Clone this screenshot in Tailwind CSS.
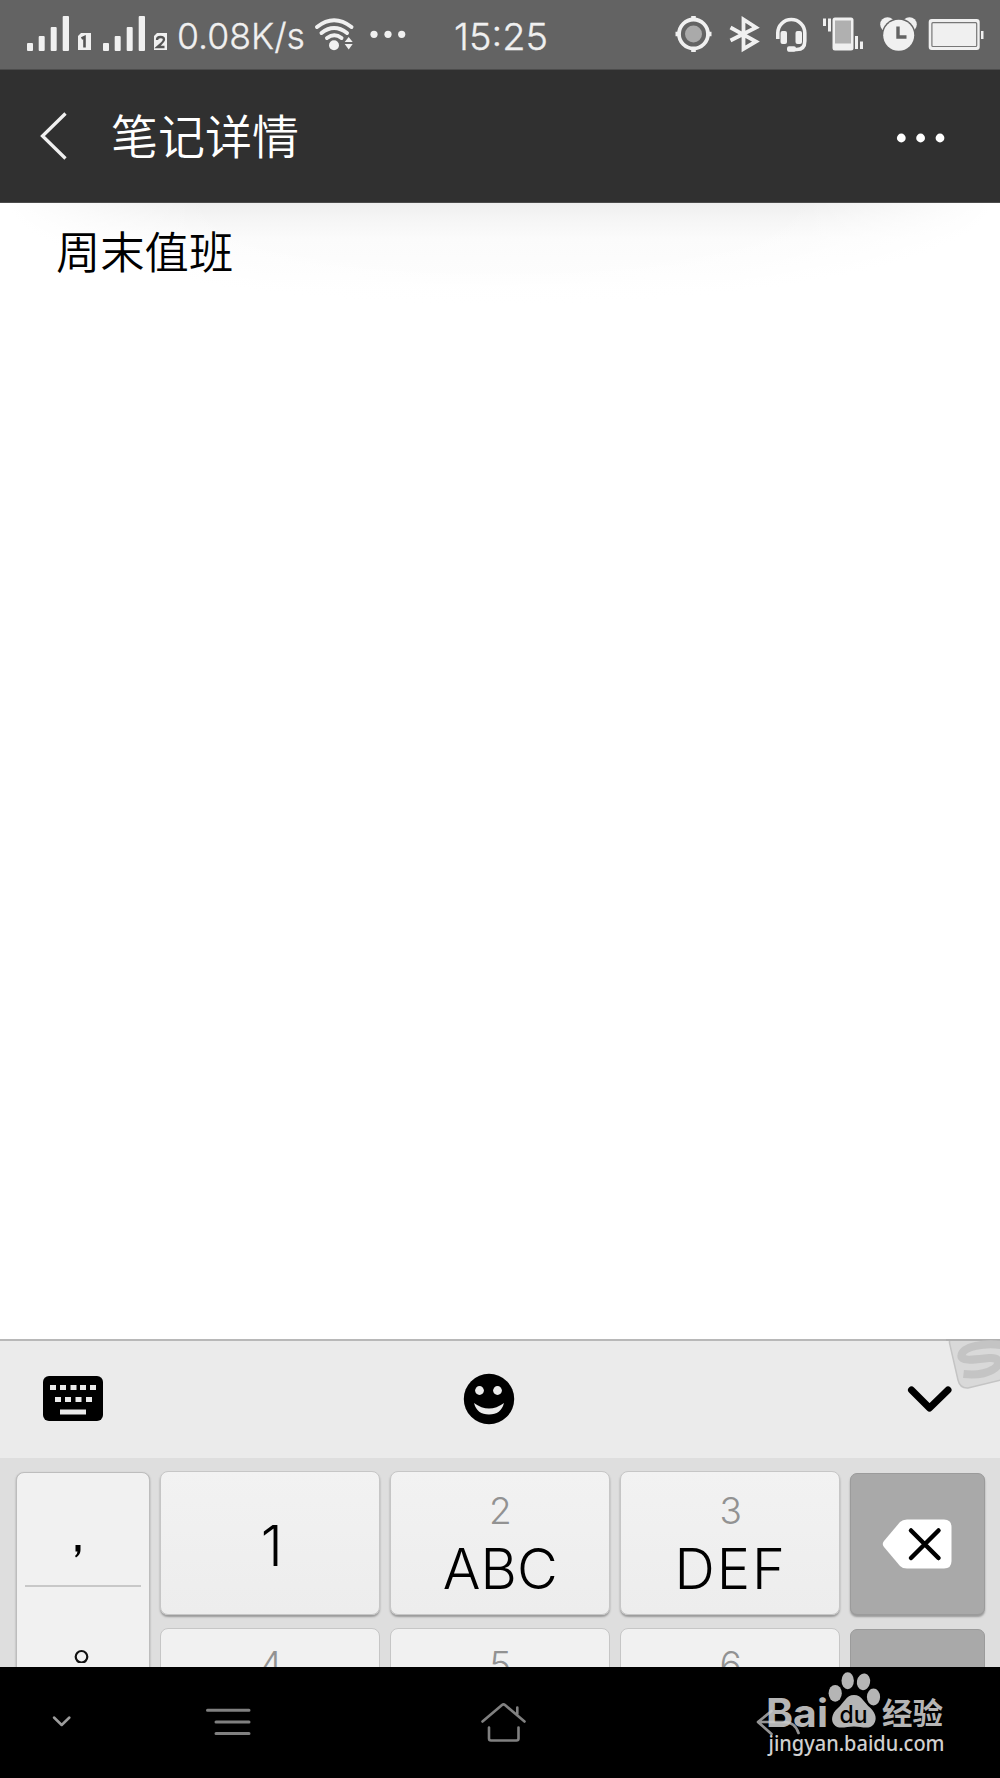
<!DOCTYPE html>
<html lang="zh-CN">
<head>
<meta charset="utf-8">
<title>笔记详情</title>
<script src="https://cdn.jsdelivr.net/npm/@tailwindcss/browser@4"></script>
</head>
<body class="bg-white">
<div class="flex h-[1778px] w-[1000px] flex-col overflow-hidden bg-white font-['Inter','Noto_Sans_CJK_SC',sans-serif]">

  <!-- Status bar -->
  <div class="flex h-[70px] shrink-0 border-b border-[#4c4c4c] bg-[#636363]">
    <svg class="h-[69px] w-[420px] shrink-0" viewBox="0 0 420 69" fill="#f0f0f0">
      <g id="bars">
        <rect x="27" y="43" width="6" height="8" rx="1"/><rect x="38.700" y="36" width="6" height="15" rx="1"/><rect x="50.700" y="27" width="6" height="24" rx="1"/><rect x="62.700" y="16" width="6.300" height="35" rx="1"/>
      </g>
      <use href="#bars" x="76"/>
      <path d="M81 33h10v17H78V36z"/>
      <path d="M157 33h10v17h-13V36z"/>
      <path d="M81.500 38.500l3-1.500v10.500" stroke="#555" stroke-width="2.600" fill="none"/>
      <path d="M157 40q0-3 3.500-3t3.500 2.500q0 2-6.500 7.500h7" stroke="#555" stroke-width="2.300" fill="none"/>
      <text x="177" y="48.500" font-size="36" font-weight="300" textLength="128" lengthAdjust="spacingAndGlyphs" stroke="#f0f0f0" stroke-width=".3">0.08K/s</text>
      <g fill="none" stroke="#f0f0f0" stroke-width="4" stroke-linecap="round">
        <path d="M317 27q17-13.500 34.500 0"/><path d="M321.500 33q12.500-10 25.500 0"/><path d="M327 38q7.500-5.500 14.500 0"/>
      </g>
      <circle cx="334" cy="45.300" r="5"/>
      <path d="M348.700 37l4 5h-8zM348.700 49.500l4-5.500h-8z"/>
      <circle cx="374" cy="34.300" r="3.600"/><circle cx="388" cy="34.300" r="3.600"/><circle cx="401.700" cy="34.300" r="3.600"/>
    </svg>
    <svg class="h-[69px] w-[580px] shrink-0" viewBox="420 0 580 69" fill="#f0f0f0">
      <text x="454" y="49.500" font-size="36.500" font-weight="300" textLength="94" lengthAdjust="spacingAndGlyphs" stroke="#f0f0f0" stroke-width=".3">15:25</text>
      <!-- location -->
      <circle cx="693.500" cy="34" r="14.500" fill="none" stroke="#f0f0f0" stroke-width="3.800"/>
      <circle cx="693.500" cy="34" r="8.500" fill="#aaa"/>
      <path d="M691.200 16h4.600v3h-4.600zM691.200 49h4.600v3h-4.600zM675.500 31.700h3v4.600h-3zM708.500 31.700h3v4.600h-3z"/>
      <!-- bluetooth -->
      <path d="M730.500 27.500L756 41.500 743.500 49V19.500L756 27.500 730.500 40.500" fill="none" stroke="#f0f0f0" stroke-width="3.800"/>
      <!-- headset -->
      <path d="M777.800 39V33a13.500 13.500 0 0 1 27 0V41q0 8.500-8 8.500H788" fill="none" stroke="#f0f0f0" stroke-width="3.600"/>
      <rect x="780.500" y="31" width="6.500" height="13" rx="2"/><rect x="795.500" y="31" width="6.500" height="13" rx="2"/><rect x="787" y="46.300" width="9" height="5.500" rx="2"/>
      <!-- vibrating phone -->
      <rect x="832.500" y="17.500" width="21" height="33" rx="2.500"/><rect x="835" y="20.500" width="16" height="23" fill="#b0b0b0"/>
      <path d="M823 18.500h3V26h-3zM828 18.500h3V31.500h-3zM855 36h3V49h-3zM860 41.500h3V49h-3z"/>
      <!-- alarm -->
      <circle cx="887.500" cy="24.500" r="7.300"/><circle cx="909.500" cy="24.500" r="7.300"/>
      <circle cx="898.700" cy="35.300" r="17" fill="#636363"/><circle cx="898.700" cy="35.300" r="15.500"/>
      <path d="M898 26.500V37h8.500" fill="none" stroke="#636363" stroke-width="3.400"/>
      <!-- battery -->
      <rect x="928.700" y="19" width="51" height="31" rx="3"/>
      <rect x="931.900" y="22.700" width="44.800" height="23.800" rx="1" fill="none" stroke="#777" stroke-width="1.200"/>
      <rect x="981" y="31" width="2.500" height="8"/>
    </svg>
  </div>

  <!-- Title bar -->
  <header class="flex h-[133px] shrink-0 items-center border-b border-[#4c4c4c] bg-[#303030] pr-[54px] pl-[40px]">
    <svg class="h-[48px] w-[28px]" viewBox="0 0 28 48" fill="none" stroke="#f0f0f0" stroke-width="3.300"><path d="M25.500 1.500L2.500 24l23 22.500"/></svg>
    <h1 class="-mt-[2px] ml-[43px] text-[47px] leading-[60px] font-[350] text-white"><span class="font-['Noto_Sans_CJK_SC',sans-serif]">笔记详情</span></h1>
    <svg class="mt-[3px] ml-auto h-[10px] w-[50px]" viewBox="0 0 50 10" fill="#fff"><circle cx="5.300" cy="5" r="4.400"/><circle cx="24.600" cy="5" r="4.400"/><circle cx="44" cy="5" r="4.400"/></svg>
  </header>

  <!-- Note body -->
  <main class="flex-1 bg-[radial-gradient(ellipse_490px_102px_at_500px_0px,transparent_60%,#ffffff_100%),linear-gradient(#efefef_0px,#f6f6f6_18px,#fbfbfb_36px,#fdfdfd_75px,#ffffff_100px)] px-[56px] pt-[15px]">
    <p class="font-['Noto_Sans_CJK_SC',sans-serif] text-[44.3px] leading-[64px] font-[350] text-black">周末值班</p>
  </main>

  <!-- Keyboard toolbar -->
  <div class="relative flex h-[119px] shrink-0 items-center justify-between border-t-[2px] border-[#b8b8b8] bg-[#ebebeb] pr-[47px] pb-[2px] pl-[43px]">
    <svg class="h-[46px] w-[60px]" viewBox="0 0 60 46">
      <rect width="60" height="45" rx="6"/>
      <path fill="#ebebeb" d="M7 9h6v5H7zM17 9h6v5h-6zM27.500 9h6v5h-6zM37 9h6v5h-6zM47 9h6v5h-6zM12 21h6v5h-6zM22 21h6v5h-6zM32.500 21h6v5h-6zM43 21h6v5h-6zM17 33.500h26v5H17z"/>
    </svg>
    <svg class="-ml-[33px] h-[52px] w-[52px]" viewBox="0 0 52 52">
      <circle cx="26" cy="26" r="25.200"/>
      <circle cx="16.500" cy="17.500" r="4.400" fill="#ebebeb"/><circle cx="34.500" cy="17.500" r="4.400" fill="#ebebeb"/>
      <path d="M11 30q15 11 30 0-3 11.500-15 11.500T11 30z" fill="#ebebeb"/>
    </svg>
    <svg class="h-[28px] w-[46px]" viewBox="0 0 46 28" fill="none" stroke="#000" stroke-width="7" stroke-linecap="round" stroke-linejoin="round"><path d="M4.500 5L22.500 23 41 5"/></svg>
    <svg class="absolute -top-[2px] right-0 h-[54px] w-[54px] overflow-hidden" viewBox="946 1339 54 54">
      <path d="M949.500 1339.500V1343L958 1380Q960 1388.500 968 1388L1001 1380V1339.500z" fill="#d9d9d9" stroke="#c4c4c4" stroke-width="1.500"/>
      <path d="M946 1340H1000" stroke="#b0b0b0" stroke-width="2"/>
      <path d="M1004 1345.500C984 1342 963 1347 961.500 1355C960 1362 975 1359.500 989 1358C1001 1357 1000 1365 993 1369.500Q982 1376 963.500 1374" fill="none" stroke="#c4c4c4" stroke-width="8"/>
    </svg>
  </div>

  <!-- Keys -->
  <div class="grid h-[209px] shrink-0 grid-cols-[134px_220px_220px_220px_135px] gap-x-[9.900px] overflow-hidden bg-[#dedede] pt-[13px] pl-[16px]">
    <div class="mt-px h-[300px] rounded-[8px] border border-[#bdbdbd] bg-[#f1f1f1] px-[8px] shadow-[0_1px_2px_#999]">
      <svg class="h-[190px] w-[116px]" viewBox="0 0 116 190">
        <path d="M50.500 72h5v5q0 5-4.500 7.500l-1-1.500q2.500-2 2.500-4.500h-2z"/>
        <path d="M0 113h116" stroke="#c8c8c8" stroke-width="2"/>
        <circle cx="56.500" cy="183.800" r="5.800" fill="none" stroke="#111" stroke-width="2.200"/>
      </svg>
    </div>
    <div class="flex flex-col gap-[13px]">
      <div class="flex h-[144px] shrink-0 items-center justify-center rounded-[8px] border border-[#c6c6c6] bg-linear-to-b from-[#f2f2f2] to-[#ededed] shadow-[0_2px_2px_#999]"><span class="pt-[6px] pl-[4px] text-[56px] leading-none font-light">1</span></div>
      <div class="h-[143px] shrink-0 rounded-[8px] border border-[#c6c6c6] bg-[#f1f1f1] pt-[16px] pl-[2px] text-center text-[37px] leading-[40px] font-light text-[#929292]">4</div>
    </div>
    <div class="flex flex-col gap-[13px]">
      <div class="h-[144px] shrink-0 rounded-[8px] border border-[#c6c6c6] bg-linear-to-b from-[#f2f2f2] to-[#ededed] pt-[19px] pl-[1px] text-center font-light shadow-[0_2px_2px_#999]"><div class="text-[37px] leading-[40px] text-[#929292]">2</div><div class="mt-[10px] text-[56px] leading-[56px]">ABC</div></div>
      <div class="h-[143px] shrink-0 rounded-[8px] border border-[#c6c6c6] bg-[#f1f1f1] pt-[16px] pl-[1px] text-center text-[37px] leading-[40px] font-light text-[#929292]">5</div>
    </div>
    <div class="flex flex-col gap-[13px]">
      <div class="h-[144px] shrink-0 rounded-[8px] border border-[#c6c6c6] bg-linear-to-b from-[#f2f2f2] to-[#ededed] pt-[19px] pl-[2px] text-center font-light shadow-[0_2px_2px_#999]"><div class="text-[37px] leading-[40px] text-[#929292]">3</div><div class="mt-[10px] text-[56px] leading-[56px] tracking-[2px]">DEF</div></div>
      <div class="h-[143px] shrink-0 rounded-[8px] border border-[#c6c6c6] bg-[#f1f1f1] pt-[16px] pl-[2px] text-center text-[37px] leading-[40px] font-light text-[#929292]">6</div>
    </div>
    <div class="flex flex-col gap-[14px] pt-[2px]">
      <div class="flex h-[142px] shrink-0 items-center rounded-[7px] border border-[#9b9b9b] bg-[#a9a9a9] pl-[31px] shadow-[0_2px_2px_#999]">
        <svg class="h-[50px] w-[70px]" viewBox="0 0 70 50">
          <path d="M25 .5H62q7.500 0 7.500 7.500V42q0 7.500-7.500 7.500H25Q20.500 49.500 18 47L2 28Q-.500 25 2 22L18 3Q20.500.5 25 .5z" fill="#fff"/>
          <path d="M29 11.500L56.500 39M56.500 11.500L29 39" stroke="#000" stroke-width="4.500" stroke-linecap="round"/>
        </svg>
      </div>
      <div class="h-[142px] shrink-0 rounded-[7px] border border-[#9b9b9b] bg-[#a9a9a9]"></div>
    </div>
  </div>

  <!-- Navigation bar -->
  <nav class="h-[111px] shrink-0 bg-black">
    <svg class="h-[111px] w-[1000px]" viewBox="0 1667 1000 111" fill="none" stroke-linecap="round" stroke-linejoin="round">
      <path d="M54 1717.500l7.700 7.500 7.700-7.500" stroke="#9c9c9c" stroke-width="2.500"/>
      <path d="M207.500 1710.300H249M216 1722H249M216 1733.500H249" stroke="#808080" stroke-width="3"/>
      <g stroke="#808080" stroke-width="2.600"><path d="M482.500 1721.500L502 1705q1.500-1.300 3 0L524.500 1721.500M517.300 1707.500V1714M489 1727.500V1738.500q0 2 2 2H516.500q2 0 2-2V1727.500"/></g>
      <g stroke="#707070" stroke-width="2.600"><path d="M771.500 1711L758 1722l13.500 12M759 1722H784q11 0 14.500 11"/></g>
      <g fill="#b5b5b5">
        <text x="766" y="1726.500" font-size="39" font-weight="700" textLength="62" lengthAdjust="spacingAndGlyphs">Bai</text>
        <ellipse cx="835.200" cy="1693.300" rx="6.600" ry="8.400"/><ellipse cx="847.700" cy="1680.700" rx="6.200" ry="8.500"/><ellipse cx="863.500" cy="1681.800" rx="6.600" ry="8.400" transform="rotate(10 863.500 1681.800)"/><ellipse cx="873.500" cy="1697" rx="6.600" ry="8.400"/>
        <path d="M854 1695C846 1695 844 1703 838 1708C831 1714 831 1721 834 1724.500C838 1730 846 1726.500 854 1726.500S869 1730 873.500 1724.500C877 1720 876.500 1714 870.500 1708C864 1703 862 1695 854 1695z"/>
        <text x="839.500" y="1722.500" font-size="24" font-weight="500" fill="#000" textLength="28" lengthAdjust="spacingAndGlyphs">du</text>
        <text x="882" y="1723.500" font-family="Noto Sans CJK SC" font-size="30" font-weight="700" textLength="61" lengthAdjust="spacingAndGlyphs">经验</text>
        <text x="768.500" y="1750.500" font-family="Noto Sans" font-size="21.500" font-weight="500" fill="#d0d0d0" textLength="176" lengthAdjust="spacingAndGlyphs">jingyan.baidu.com</text>
      </g>
      <path d="M771.500 1711L758 1722l13.500 12M759 1722H784q11 0 14.500 11" stroke="#fff" stroke-opacity=".25" stroke-width="2.600"/>
    </svg>
  </nav>
</div>
</body>
</html>
